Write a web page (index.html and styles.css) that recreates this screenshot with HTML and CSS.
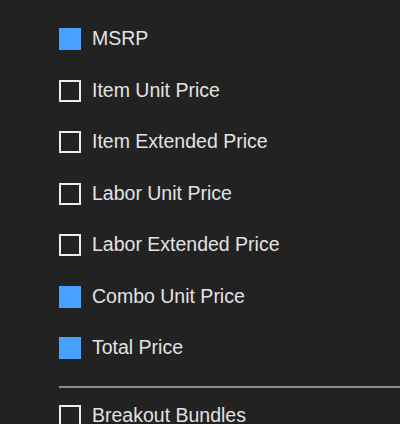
FILE: index.html
```html
<!DOCTYPE html>
<html lang="en">
<head>
    <meta charset="UTF-8">
    <meta name="viewport" content="width=device-width, initial-scale=1.0">
    <title>Price Columns</title>
    <link rel="stylesheet" href="styles.css">
</head>
<body>
    <div class="options">
        <div class="option"><span class="box checked"></span><span class="label">MSRP</span></div>
        <div class="option"><span class="box"></span><span class="label">Item Unit Price</span></div>
        <div class="option"><span class="box"></span><span class="label">Item Extended Price</span></div>
        <div class="option"><span class="box"></span><span class="label">Labor Unit Price</span></div>
        <div class="option"><span class="box"></span><span class="label">Labor Extended Price</span></div>
        <div class="option"><span class="box checked"></span><span class="label">Combo Unit Price</span></div>
        <div class="option"><span class="box checked"></span><span class="label">Total Price</span></div>
    </div>
    <hr class="divider">
    <div class="options extra">
        <div class="option"><span class="box"></span><span class="label">Breakout Bundles</span></div>
    </div>
</body>
</html>
```
FILE: styles.css
```css
body {
    margin: 0;
    background-color: #222222;
    font-family: "Liberation Sans", Arial, sans-serif;
    color: #e2e2e2;
    height: 424px;
    overflow: hidden;
}
.options {
    display: flex;
    flex-direction: column;
    gap: 29.5px;
    padding: 28px 0 0 59px;
}
.option {
    display: flex;
    align-items: center;
    gap: 11px;
    height: 22px;
}
.box {
    width: 22px;
    height: 22px;
    box-sizing: border-box;
    border: 2px solid #ededed;
    flex-shrink: 0;
}
.box.checked {
    background-color: #47a1ff;
    border-color: #47a1ff;
}
.label {
    font-size: 19.5px;
    line-height: 22px;
    position: relative;
    top: -1px;
}
.divider {
    margin: 27px 0 0 59px;
    border: none;
    border-top: 2px solid #8e8e8e;
    height: 0;
}
.options.extra {
    padding-top: 17px;
}
```
